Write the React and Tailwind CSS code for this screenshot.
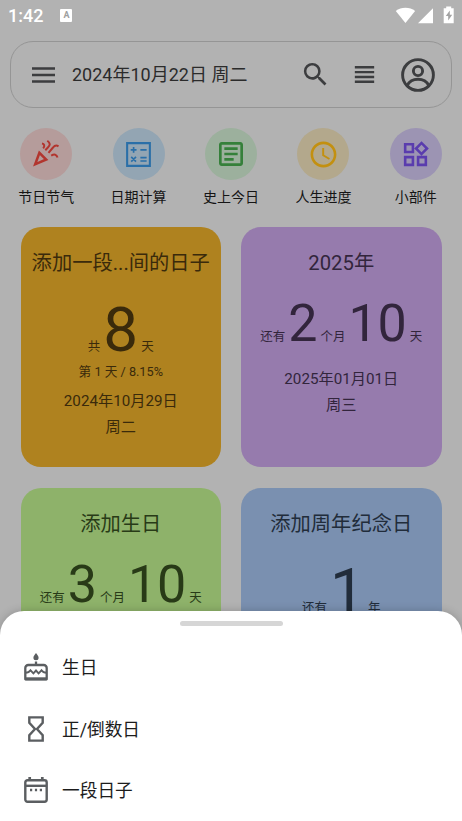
import React from 'react';
import {
  MdOutlineArticle,
  MdAccessTime,
  MdOutlineWidgets,
  MdSearch,
  MdViewHeadline,
} from 'react-icons/md';

function PartyIcon({ size }) {
  return (
    <svg width={size} height={size} viewBox="0 0 28 28" fill="none" stroke="currentColor" strokeWidth="2">
      <path d="M3.200 24.300L7.400 12.800l6.800 6.700z" strokeWidth="2.500" />
      <path d="M10 3.600c2.200.3 3.200 2.200 1.200 4.800" />
      <path d="M15.300.8c3 2.200 3.200 4.300.8 6.500l-2.800 3" />
      <path d="M26.500 6.300c-2.500-1.600-4.100-.6-5.500 1.200l-4.500 5.300" />
      <path d="M25.500 17.500c-.8-3.300-3.300-3.600-6.300-1.800" />
    </svg>
  );
}

function CalcIcon({ size }) {
  return (
    <svg width={size} height={size} viewBox="0 0 24 24" fill="none" stroke="currentColor" strokeWidth="1.600">
      <path d="M1.100 1.100h21.800v21.800H1.100z" strokeWidth="2" />
      <path d="M7.300 4.700v5.600M4.500 7.500h5.600M13.800 7.500h6" />
      <path d="M5 14.200l4.600 4.600M9.600 14.200L5 18.800M13.800 15h6M13.800 18.200h6" />
    </svg>
  );
}

const shortcuts = [
  { label: '节日节气', Icon: PartyIcon, size: 28, style: 'bg-[#b59c9b] text-[#b2352e]' },
  { label: '日期计算', Icon: CalcIcon, size: 25, style: 'bg-[#93a5b3] text-[#2a6fa8]' },
  { label: '史上今日', Icon: MdOutlineArticle, size: 32, style: 'bg-[#9cb09d] text-[#35803a]' },
  { label: '人生进度', Icon: MdAccessTime, size: 31, style: 'bg-[#b3a88c] text-[#c3900f]' },
  { label: '小部件', Icon: MdOutlineWidgets, size: 31, style: 'bg-[#9c94b3] text-[#5a3cae]' },
];

const cards = [
  {
    title: '添加一段...间的日子',
    style: 'bg-[#af821f] text-[#3a2a0b]',
    parts: ['共', '8', '天'],
    big: true,
    progress: '第 1 天 / 8.15%',
    date: '2024年10月29日',
    week: '周二',
  },
  {
    title: '2025年',
    style: 'bg-[#967bad] text-[#32253c]',
    parts: ['还有', '2', '个月', '10', '天'],
    date: '2025年01月01日',
    week: '周三',
  },
  {
    title: '添加生日',
    style: 'bg-[#8eb26a] text-[#283a17]',
    parts: ['还有', '3', '个月', '10', '天'],
  },
  {
    title: '添加周年纪念日',
    style: 'bg-[#7a90b0] text-[#212c3a]',
    parts: ['还有', '1', '年'],
    big: true,
  },
];

function MenuIcon() {
  return (
    <svg width="24" height="16" viewBox="0 0 24 16" fill="currentColor">
      <path d="M0 0.3h23v2.5H0zM0 6.800h23v2.500H0zM0 13.300h23v2.500H0z" />
    </svg>
  );
}

function AccountIcon() {
  return (
    <svg width="36" height="36" viewBox="0 0 36 36" fill="none" stroke="currentColor" strokeWidth="2.9">
      <circle cx="18" cy="18" r="15.4" />
      <circle cx="18" cy="14" r="4.6" />
      <path d="M7.200 28.600C9.500 24 13.400 22.300 18 22.300s8.500 1.700 10.800 6.300" />
    </svg>
  );
}

function CakeIcon() {
  return (
    <svg width="24" height="30" viewBox="0 0 24 30" fill="none" stroke="currentColor" strokeWidth="2.300">
      <path d="M12 1c1.300 1.900 2.600 3.200 2.600 4.700a2.600 2.500 0 0 1-5.200 0C9.400 4.200 10.700 2.900 12 1z" fill="currentColor" stroke="none" />
      <path d="M12 9.500v4" />
      <path d="M1.300 27.300V16a3 3 0 0 1 3-3h15.400a3 3 0 0 1 3 3v11.300z" strokeLinejoin="round" />
      <path d="M1.500 26.800h21" strokeWidth="3" />
      <path d="M1.500 20.800c2.200 0 3.600-.3 5-2.500l2.900 3L12 18.500l2.600 2.800 2.900-3c1.400 2.200 2.800 2.500 5 2.500" strokeWidth="1.900" />
    </svg>
  );
}

function HourglassIcon() {
  return (
    <svg width="16" height="26" viewBox="0 0 16 26" fill="none" stroke="currentColor" strokeWidth="2.400">
      <path d="M1.300 1.400h13.400v5.400L9 13l5.700 6.200v5.400H1.300v-5.400L7 13 1.300 6.800z" />
    </svg>
  );
}

function CalendarIcon() {
  return (
    <svg width="24" height="28" viewBox="0 0 24 28" fill="none" stroke="currentColor" strokeWidth="2.400">
      <rect x="1.300" y="4.300" width="21.400" height="21.400" rx="2.200" />
      <path d="M1.300 9.800h21.400" />
      <path d="M5.700 1v3.500M18.300 1v3.500" strokeWidth="2.700" />
      <path d="M6 14h2.200M10.900 14h2.200M15.800 14H18" />
    </svg>
  );
}

const actions = [
  { label: '生日', icon: <CakeIcon /> },
  { label: '正/倒数日', icon: <HourglassIcon /> },
  { label: '一段日子', icon: <CalendarIcon /> },
];

function StatusBar() {
  return (
    <div className="flex h-8 items-center pl-2 pr-[7px] text-white">
      <span className="text-[18px] font-medium leading-none">1:42</span>
      <span className="ml-[17px] -mt-px flex h-[13px] w-3 items-center justify-center rounded-[1px] bg-white text-[9px] font-bold leading-none text-[#a0a0a0]">
        A
      </span>
      <svg className="ml-auto -mt-[3px]" width="60" height="18" viewBox="0 0 60 18" fill="currentColor">
        <path d="M.8 5C6.500.6 15.500.6 21.200 5L11 17z" transform="scale(.95 1)" />
        <path d="M23 17.200h15V2.200z" />
        <path d="M51.200.4h5v1.800h2.500V17.200H48.700V2.200h2.500z" />
        <path d="M54.800 4.400l-4 5.700h2.400v4.300l4-5.700h-2.400z" fill="#a3a3a3" />
      </svg>
    </div>
  );
}

function DayCard({ card }) {
  return (
    <div className={`flex h-[240px] flex-col items-center rounded-[20px] ${card.style}`}>
      <h2 className="flex h-[66px] items-center pt-[6px] text-[20.3px] leading-none whitespace-nowrap">{card.title}</h2>
      <div className={`flex items-baseline whitespace-nowrap ${card.big ? 'h-[69px] gap-[3px]' : 'h-[74px] gap-[3px]'}`}>
        {card.parts.map((part, i) =>
          i % 2 === 1 ? (
            <span
              key={i}
              className={card.big ? 'text-[62px] leading-[73px]' : 'text-[52px] leading-[61px]'}
            >
              {part}
            </span>
          ) : (
            <span key={i} className="text-[12.5px] leading-none">
              {part}
            </span>
          )
        )}
      </div>
      {card.progress && <p className="mb-[8px] text-[12.7px] leading-[19px]">{card.progress}</p>}
      {card.date && <p className="text-[15.2px] leading-[25.5px]">{card.date}</p>}
      {card.week && <p className="text-[15.2px] leading-[25.5px]">{card.week}</p>}
    </div>
  );
}

export default function App() {
  return (
    <div className="relative h-[821px] w-[462px] overflow-hidden bg-[#b2b2b2] font-['Roboto','Noto_Sans_CJK_SC',sans-serif]">
      <StatusBar />

      <header className="mx-[10px] mt-[9px] flex h-[67px] items-center rounded-[23px] border border-[#959595] pl-[21px] pr-[15px] text-[#3c3d3f]">
        <MenuIcon />
        <span className="ml-4 text-[18px] leading-none text-[#2b2b2b]">2024年10月22日 周二</span>
        <MdSearch className="ml-auto" size={31} />
        <MdViewHeadline className="ml-[19px]" size={29} />
        <span className="ml-[21px]">
          <AccountIcon />
        </span>
      </header>

      <nav className="mt-5 grid grid-cols-5">
        {shortcuts.map(({ label, Icon, size, style }) => (
          <div key={label} className="flex flex-col items-center">
            <span className={`flex size-[52px] items-center justify-center rounded-full ${style}`}>
              <Icon size={size} />
            </span>
            <span className="mt-[7px] text-[14px] leading-5 text-[#151515]">{label}</span>
          </div>
        ))}
      </nav>

      <main className="mx-[20.5px] mt-5 grid grid-cols-2 gap-x-5 gap-y-[21px]">
        {cards.map((card) => (
          <DayCard key={card.title} card={card} />
        ))}
      </main>

      {/* bottom sheet */}
      <div className="absolute inset-x-0 bottom-0 h-[210px] rounded-t-[24px] bg-white shadow-[0_0_10px_rgba(0,0,0,0.2)]">
        <div className="mx-auto mt-[10px] h-[5px] w-[103px] rounded-full bg-[#d6d6d6]" />
        <ul className="mt-[11px]">
          {actions.map(({ label, icon }) => (
            <li key={label} className="flex h-[61.5px] items-center pl-5 text-[#5b5e61]">
              <span className="flex w-8 justify-center pb-px">{icon}</span>
              <span className="ml-[10px] pt-[3px] text-[17.700px] leading-none text-[#1c1c1c]">{label}</span>
            </li>
          ))}
        </ul>
      </div>
    </div>
  );
}
